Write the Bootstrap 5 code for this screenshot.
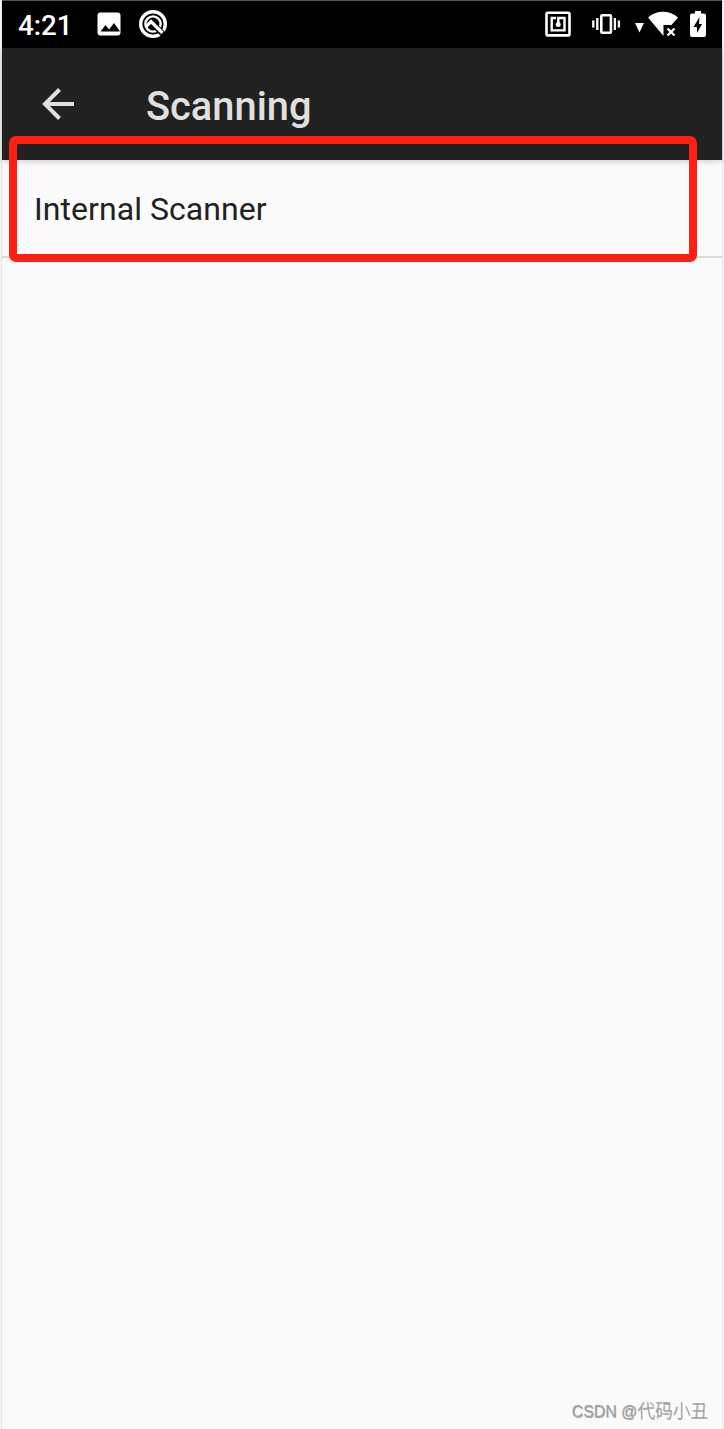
<!DOCTYPE html>
<html lang="en">
<head>
<meta charset="utf-8">
<meta name="viewport" content="width=device-width, initial-scale=1">
<title>Scanning</title>
<link href="https://cdn.jsdelivr.net/npm/bootstrap@5.3.0/dist/css/bootstrap.min.css" rel="stylesheet">
<style>
body{background:#f4f4f4;font-family:Roboto,"Noto Sans CJK SC",sans-serif;overflow:hidden}
.phone{width:720px;height:1429px;margin-left:2px;background:#fafafa;box-shadow:0 0 0 1px #e8e8e8}
.statusbar{height:48px;background:#000;border-top:1px solid #555;padding-left:16px;padding-right:15px}
.clock{font-size:27.700px;font-weight:500;line-height:50px;width:79px}
.appbar{height:112px;background:#212121;color:#e0e0e0;padding-left:40px;box-shadow:0 1px 6px rgba(0,0,0,.2)}
.back-btn{width:32px;height:32px;color:#e0e0e0}
.app-title{font-size:39.800px;font-weight:500;line-height:48px;margin-left:72px;padding-top:6px}
.list-group-flush>.setting.list-group-item{height:98px;background:transparent;border-width:0 0 2px;border-color:#dadada;color:#212121;font-size:32px;letter-spacing:.06px;line-height:40px;padding:29px 32px}
.highlight{left:7px;top:136px;width:688px;height:126px;border:8px solid #ff2011;border-radius:7px;pointer-events:none}
.watermark{right:14px;bottom:5px;font:300 17.700px/24px "Noto Sans CJK SC",sans-serif;color:#a0a0a0;text-shadow:.5px .5px 0 #a8a8a8;white-space:nowrap}
.watermark-latin{font:15.900px/24px "Liberation Sans",sans-serif}
svg{display:block;flex:none}
</style>
</head>
<body>
<main class="phone position-relative">
  <header class="statusbar d-flex align-items-start text-white">
    <span class="clock">4:21</span>
    <svg width="72" height="47" viewBox="97 1 72 47" fill="none">
      <rect x="97.500" y="12.500" width="23" height="23" rx="3" fill="#fff"/>
      <path d="M100.500 31.500l5-6.500 3.500 4.500 5-6.500 6 8.500z" fill="#000"/>
      <circle cx="153" cy="24" r="12.300" stroke="#fff" stroke-width="3.400"/>
      <circle cx="153" cy="24" r="7.600" stroke="#fff" stroke-width="2.400"/>
      <path d="M155 26l10 10" stroke="#000" stroke-width="6"/>
      <path d="M146.500 26l4.500-4.500 11.500 11.500" stroke="#fff" stroke-width="3.200"/>
    </svg>
    <svg class="ms-auto" width="163" height="47" viewBox="544 1 163 47" fill="none">
      <rect x="546.500" y="12.800" width="23" height="22.600" rx="1.500" stroke="#fff" stroke-width="2.600"/>
      <path d="M556 18h-4.300v12.400h12.800V18h-6.200v6" stroke="#fff" stroke-width="2.400"/>
      <circle cx="558.200" cy="24.500" r="2.500" fill="#fff"/>
      <rect x="601.300" y="15.300" width="9.600" height="17.400" rx="1" stroke="#fff" stroke-width="2.600"/>
      <path d="M597.300 18v12M593.300 20.500v7M614.900 18v12M618.900 20.500v7" stroke="#fff" stroke-width="2.300"/>
      <path d="M635 23h9l-4.500 9.500z" fill="#fff"/>
      <path d="M648 17.500C656 9.800 670 9.800 678 17.500L671.500 25H663.500v11z" fill="#fff"/>
      <path d="M667.500 28.500l7 7m0-7l-7 7" stroke="#fff" stroke-width="2.400"/>
      <path d="M695 11h6v2.500h3q2 0 2 2V35q0 2-2 2h-12q-2 0-2-2V15.500q0-2 2-2h3z" fill="#fff"/>
      <path d="M699.500 17l-6 10h3.500v6l5-9h-3z" fill="#000"/>
    </svg>
  </header>
  <nav class="appbar d-flex align-items-center">
    <button class="back-btn btn p-0 border-0" aria-label="Back">
      <svg width="32" height="32" viewBox="0 0 32 32" fill="none" stroke="currentColor" stroke-width="4"><path d="M32 16H3M17.500 1.500L3 16l14.500 14.500"/></svg>
    </button>
    <h1 class="app-title mb-0">Scanning</h1>
  </nav>
  <div class="list-group list-group-flush rounded-0">
    <a class="setting list-group-item">Internal Scanner</a>
  </div>
  <div class="highlight position-absolute"></div>
  <footer class="watermark position-absolute"><span class="watermark-latin">CSDN @</span>代码小丑</footer>
</main>
<script src="https://cdn.jsdelivr.net/npm/bootstrap@5.3.0/dist/js/bootstrap.bundle.min.js"></script>
</body>
</html>
